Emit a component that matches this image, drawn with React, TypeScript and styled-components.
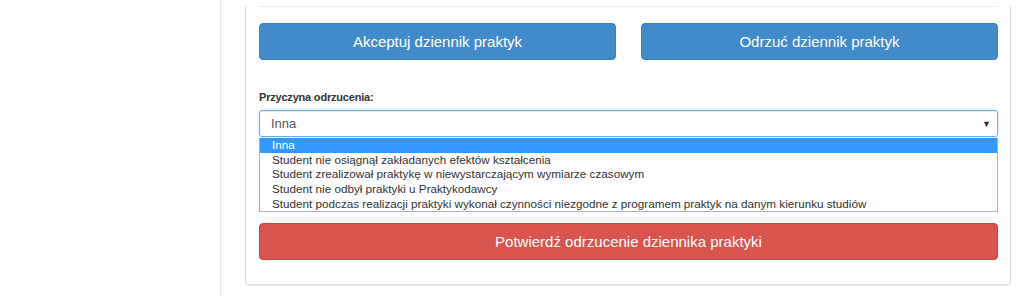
import React from "react";
import styled, { createGlobalStyle } from "styled-components";

const Global = createGlobalStyle`
  html, body { margin: 0; padding: 0; background: #fff; }
  body { font-family: "Liberation Sans", Arial, sans-serif; color: #333; }
  * { box-sizing: border-box; }
`;

const Page = styled.div`
  display: flex;
  width: 1024px;
  height: 296px;
  overflow: hidden;
`;

const Sidebar = styled.div`
  width: 221px;
  flex: none;
  border-right: 1px solid #e7e7e7;
`;

const Main = styled.div`
  flex: 1;
  padding-left: 24px;
`;

const Panel = styled.div`
  width: 766px;
  border: 1px solid #dddddd;
  border-top: none;
  border-radius: 0 0 4px 4px;
  padding: 0 12px 24px 13px;
  box-shadow: 0 1px 1px rgba(0, 0, 0, 0.05);
`;

const Divider = styled.hr`
  margin: 6px 0 16px;
  border: 0;
  border-top: 1px solid #eeeeee;
  height: 0;
`;

const ButtonRow = styled.div`
  display: grid;
  grid-template-columns: 357px 357px;
  justify-content: space-between;
`;

const Button = styled.button<{ $variant: "primary" | "danger" }>`
  display: block;
  width: 100%;
  height: 37px;
  border: 1px solid ${(p) => (p.$variant === "primary" ? "#3b7fc0" : "#d43f3a")};
  border-radius: 4px;
  background: ${(p) => (p.$variant === "primary" ? "#428bca" : "#d9534f")};
  color: #fff;
  font-family: "Liberation Sans", Arial, sans-serif;
  font-size: 15px;
  line-height: 20px;
  padding: 0;
  cursor: pointer;
`;

const FormGroup = styled.div`
  margin-top: 30px;
`;

const Label = styled.label`
  display: block;
  font-size: 11px;
  font-weight: bold;
  letter-spacing: -0.2px;
  line-height: 15px;
  margin-bottom: 5px;
  color: #333;
`;

const SelectBox = styled.div`
  display: flex;
  align-items: center;
  justify-content: space-between;
  height: 27px;
  padding: 0 6px 0 11px;
  border: 1px solid #66afe9;
  border-radius: 3px;
  box-shadow: inset 0 1px 1px rgba(0, 0, 0, 0.075), 0 0 3px rgba(102, 175, 233, 0.5);
  font-size: 13px;
  color: #555;
`;

const Arrow = styled.span`
  font-size: 9px;
  color: #333;
`;

const OptionList = styled.ul`
  list-style: none;
  margin: 1px 0 0;
  padding: 0;
  border: 1px solid #aab2c8;
  border-top: none;
`;

const Option = styled.li<{ $selected?: boolean }>`
  height: 14.7px;
  line-height: 14.7px;
  padding-left: 12px;
  font-size: 11.7px;
  white-space: nowrap;
  color: ${(p) => (p.$selected ? "#fff" : "#333")};
  background: ${(p) => (p.$selected ? "#3399ff" : "transparent")};
`;

const ConfirmWrap = styled.div`
  margin-top: 11px;
`;

const options = [
  "Inna",
  "Student nie osiągnął zakładanych efektów kształcenia",
  "Student zrealizował praktykę w niewystarczającym wymiarze czasowym",
  "Student nie odbył praktyki u Praktykodawcy",
  "Student podczas realizacji praktyki wykonał czynności niezgodne z programem praktyk na danym kierunku studiów",
];

export default function App() {
  return (
    <>
      <Global />
      <Page>
        <Sidebar />
        <Main>
          <Panel>
            <Divider />
            <ButtonRow>
              <Button $variant="primary">Akceptuj dziennik praktyk</Button>
              <Button $variant="primary">Odrzuć dziennik praktyk</Button>
            </ButtonRow>
            <FormGroup>
              <Label>Przyczyna odrzucenia:</Label>
              <SelectBox>
                <span>Inna</span>
                <Arrow>▼</Arrow>
              </SelectBox>
              <OptionList>
                {options.map((o, i) => (
                  <Option key={o} $selected={i === 0}>
                    {o}
                  </Option>
                ))}
              </OptionList>
            </FormGroup>
            <ConfirmWrap>
              <Button $variant="danger">Potwierdź odrzucenie dziennika praktyki</Button>
            </ConfirmWrap>
          </Panel>
        </Main>
      </Page>
    </>
  );
}
